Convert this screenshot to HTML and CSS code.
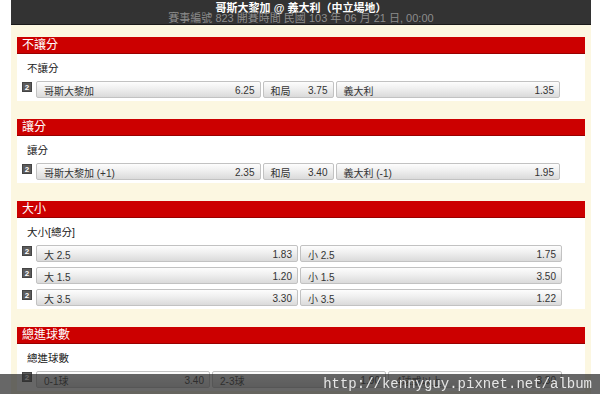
FILE: index.html
```html
<!DOCTYPE html>
<html lang="zh-Hant">
<head>
    <meta charset="UTF-8">
    <meta name="viewport" content="width=device-width, initial-scale=1.0">
    <title>哥斯大黎加 @ 義大利</title>
    <link rel="stylesheet" href="styles.css">
</head>
<body>
    <div class="page">
        <div class="match-head">
            <div class="match-title">哥斯大黎加 @ 義大利（中立場地）</div>
            <div class="match-info">賽事編號 823 開賽時間 民國 103 年 06 月 21 日, 00:00</div>
        </div>

        <div class="market">
            <div class="market-bar">不讓分</div>
            <div class="market-body">
                <div class="market-label">不讓分</div>
                <div class="odds-row">
                    <span class="badge">2</span>
                    <div class="odds odds-1x2">
                        <div class="pick"><span>哥斯大黎加</span><span>6.25</span></div>
                        <div class="pick"><span>和局</span><span>3.75</span></div>
                        <div class="pick"><span>義大利</span><span>1.35</span></div>
                    </div>
                </div>
            </div>
        </div>

        <div class="market">
            <div class="market-bar">讓分</div>
            <div class="market-body">
                <div class="market-label">讓分</div>
                <div class="odds-row">
                    <span class="badge">2</span>
                    <div class="odds odds-1x2">
                        <div class="pick"><span>哥斯大黎加 (+1)</span><span>2.35</span></div>
                        <div class="pick"><span>和局</span><span>3.40</span></div>
                        <div class="pick"><span>義大利 (-1)</span><span>1.95</span></div>
                    </div>
                </div>
            </div>
        </div>

        <div class="market">
            <div class="market-bar">大小</div>
            <div class="market-body">
                <div class="market-label">大小[總分]</div>
                <div class="odds-row">
                    <span class="badge">2</span>
                    <div class="odds odds-2">
                        <div class="pick"><span>大 2.5</span><span>1.83</span></div>
                        <div class="pick"><span>小 2.5</span><span>1.75</span></div>
                    </div>
                </div>
                <div class="odds-row">
                    <span class="badge">2</span>
                    <div class="odds odds-2">
                        <div class="pick"><span>大 1.5</span><span>1.20</span></div>
                        <div class="pick"><span>小 1.5</span><span>3.50</span></div>
                    </div>
                </div>
                <div class="odds-row">
                    <span class="badge">2</span>
                    <div class="odds odds-2">
                        <div class="pick"><span>大 3.5</span><span>3.30</span></div>
                        <div class="pick"><span>小 3.5</span><span>1.22</span></div>
                    </div>
                </div>
            </div>
        </div>

        <div class="market">
            <div class="market-bar">總進球數</div>
            <div class="market-body">
                <div class="market-label">總進球數</div>
                <div class="odds-row">
                    <span class="badge">2</span>
                    <div class="odds odds-3">
                        <div class="pick"><span>0-1球</span><span>3.40</span></div>
                        <div class="pick"><span>2-3球</span><span>1.90</span></div>
                        <div class="pick"><span>4球或以上</span><span>3.30</span></div>
                    </div>
                </div>
            </div>
        </div>
    </div>

    <div class="watermark">http://kennyguy.pixnet.net/album</div>
</body>
</html>
```

FILE: styles.css
```css
body {
    margin: 0;
    background-color: #fff;
    font-family: "Liberation Sans", Arial, "Noto Sans CJK TC", sans-serif;
    color: #333;
    overflow: hidden;
}
.page {
    width: 580px;
    margin-left: 11px;
    min-height: 394px;
    background-color: #fcf7e1;
    padding: 0 6px;
    box-sizing: border-box;
}
.match-head {
    margin: 0 -6px 12px;
    height: 25px;
    background-color: #333;
    border-bottom: 1px solid #1a1a1a;
    box-sizing: border-box;
    text-align: center;
    padding-top: 2px;
}
.match-title {
    color: #fff;
    font-size: 11px;
    font-weight: bold;
    line-height: 12px;
}
.match-info {
    color: #8c8c8c;
    font-size: 11px;
    line-height: 9px;
}
.market {
    margin-bottom: 18px;
}
.market-bar {
    height: 17px;
    line-height: 17px;
    background-color: #cc0000;
    border-bottom: 1px solid #990000;
    box-sizing: border-box;
    color: #fff;
    font-size: 12px;
    padding-left: 5px;
}
.market-body {
    background-color: #fff;
    padding: 7px 23px 3px 5px;
}
.market-label {
    font-size: 10.5px;
    line-height: 14px;
    padding-left: 5px;
    margin-bottom: 6px;
    color: #222;
}
.odds-row {
    display: flex;
    align-items: flex-start;
    gap: 4px;
    margin-bottom: 5px;
}
.odds-row:last-child {
    margin-bottom: 0;
}
.badge {
    width: 10px;
    height: 10px;
    margin-top: 1px;
    background-color: #5c5c5c;
    border: 1px solid #444;
    box-sizing: border-box;
    color: #fff;
    font-size: 8px;
    font-weight: bold;
    line-height: 9px;
    text-align: center;
}
.odds {
    flex: 1;
    display: grid;
    gap: 2px;
}
.odds-1x2 {
    grid-template-columns: 1fr 71px 1fr;
    margin-right: 2px;
}
.odds-2 {
    grid-template-columns: 1fr 1fr;
}
.odds-3 {
    grid-template-columns: 1fr 1fr 1fr;
}
.pick {
    height: 17px;
    display: flex;
    justify-content: space-between;
    align-items: center;
    padding: 2px 5px 0 7px;
    box-sizing: border-box;
    border: 1px solid #c2c2c2;
    border-radius: 2px;
    background: linear-gradient(to bottom, #fdfdfd 0%, #efefef 45%, #dadada 100%);
    font-size: 10px;
    color: #333;
}
.watermark {
    position: fixed;
    left: 0;
    right: 0;
    bottom: 0;
    height: 20px;
    background-color: rgba(45, 45, 45, 0.72);
    color: #e6e6e6;
    font-family: "Liberation Mono", "Courier New", monospace;
    font-size: 14px;
    line-height: 20px;
    text-align: right;
    padding-right: 8px;
}
```
